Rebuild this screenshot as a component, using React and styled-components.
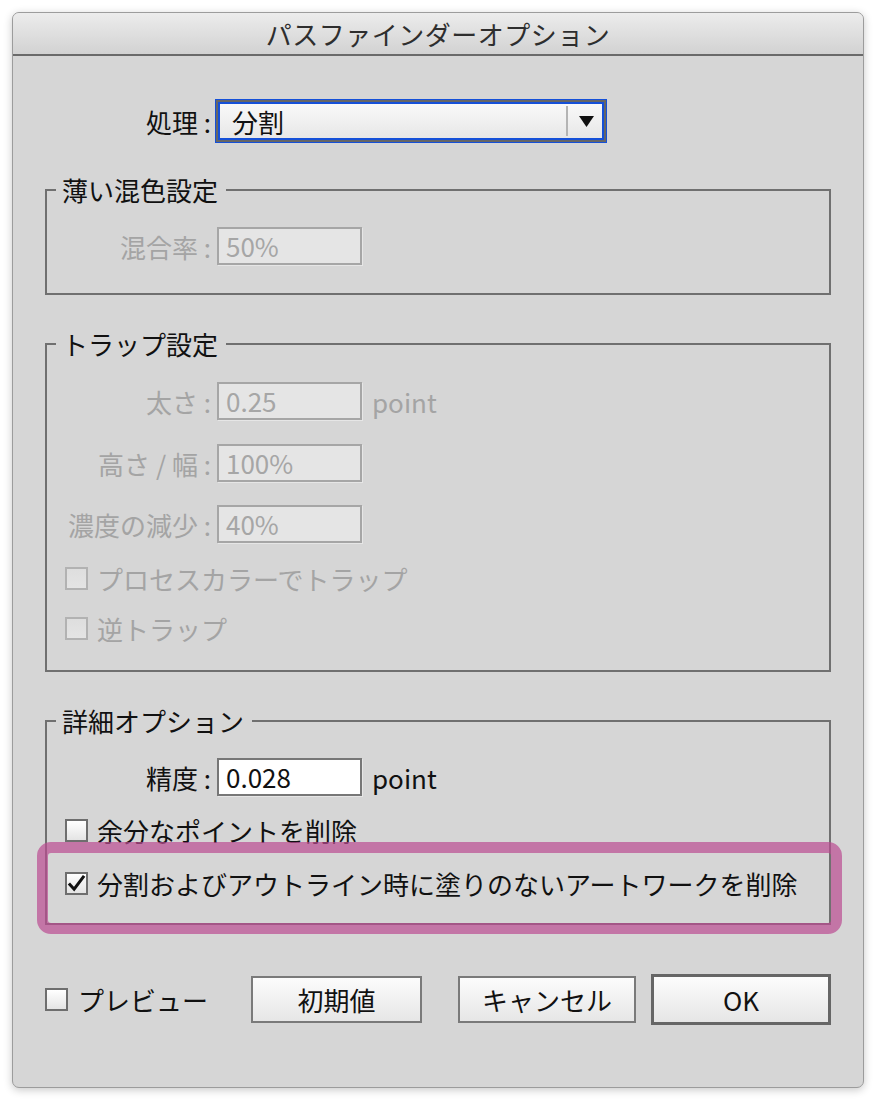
import React from 'react'
import styled, { createGlobalStyle } from 'styled-components'

const Global = createGlobalStyle`
  html, body {
    margin: 0;
    background: #ffffff;
  }
  body {
    font-family: "Noto Sans CJK JP", "Noto Sans", sans-serif;
  }
  * { box-sizing: border-box; }
`

const Page = styled.div`
  padding: 12px 0 0 12px;
  width: 876px;
  height: 1100px;
`

const Window = styled.div`
  position: relative;
  width: 852px;
  height: 1076px;
  background: #d6d6d6;
  border: 1px solid #9c9c9c;
  border-radius: 7px;
  box-shadow: 0 2px 9px rgba(0, 0, 0, 0.22);
  display: flex;
  flex-direction: column;
`

const TitleBar = styled.div`
  height: 43px;
  flex-shrink: 0;
  border-radius: 6px 6px 0 0;
  background: linear-gradient(#ececec, #d2d2d2);
  border-bottom: 2px solid #6a6a6a;
  display: flex;
  align-items: center;
  justify-content: center;
  font-size: 26px;
  color: #2e2e2e;
  letter-spacing: 0.5px;
`

const Body = styled.div`
  padding: 44px 32px 0;
  display: flex;
  flex-direction: column;
`

const Row = styled.div`
  display: flex;
  align-items: center;
  height: ${p => p.$h || 38}px;
  margin-top: ${p => p.$mt || 0}px;
  padding-left: ${p => p.$pl || 0}px;
`

const Label = styled.div`
  width: 146px;
  text-align: right;
  font-size: 26px;
  color: ${p => (p.$disabled ? '#a4a4a4' : '#111')};
  white-space: nowrap;
  margin-right: ${p => p.$gap || 6}px;
`

const Select = styled.div`
  width: 390px;
  height: 42px;
  border: 2px solid #666;
  outline: 2px solid #1550d8;
  outline-offset: -4px;
  box-shadow: 0 0 0 1px #1550d8;
  background: linear-gradient(#fafafa, #e6e6e6);
  display: flex;
  align-items: center;
  padding-left: 14px;
  font-size: 26px;
  color: #111;
`

const SelectValue = styled.div`
  flex: 1;
`

const SelectDivider = styled.div`
  width: 2px;
  height: 30px;
  background: #b4b4b4;
`

const SelectArrow = styled.div`
  width: 36px;
  display: flex;
  justify-content: center;
`

const Group = styled.fieldset`
  margin: ${p => p.$mt}px 0 0;
  padding: ${p => p.$pt}px 18px ${p => p.$pb}px;
  border: 2px solid #707070;
  min-width: 0;
`

const Legend = styled.legend`
  margin-left: -9px;
  padding: 0 8px 0 6px;
  font-size: 26px;
  line-height: 30px;
  color: #111;
`

const TextBox = styled.div`
  width: 145px;
  height: 38px;
  border: 2px solid ${p => (p.$disabled ? '#a6a6a6' : '#777')};
  background: ${p => (p.$disabled ? '#e5e5e5' : '#ffffff')};
  box-shadow: 1px 1px 0 #e6e6e6;
  color: ${p => (p.$disabled ? '#a6a6a6' : '#111')};
  font-size: 26px;
  line-height: 34px;
  padding-left: 7px;
`

const Unit = styled.div`
  margin-left: 10px;
  font-size: 26px;
  color: ${p => (p.$disabled ? '#a4a4a4' : '#111')};
`

const CheckItem = styled.label`
  display: flex;
  align-items: center;
  font-size: 26px;
  color: ${p => (p.$disabled ? '#a4a4a4' : '#111')};
  white-space: nowrap;
`

const Box = styled.span`
  width: 23px;
  height: 23px;
  margin-right: ${p => p.$gap || 9}px;
  border: 2px solid ${p => (p.$disabled ? '#b2b2b2' : '#6e6e6e')};
  background: ${p => (p.$disabled ? 'linear-gradient(#dedede, #e4e4e4)' : 'linear-gradient(#ffffff, #e4e4e4)')};
  display: flex;
  align-items: center;
  justify-content: center;
`

const Footer = styled.div`
  display: flex;
  align-items: center;
  height: 51px;
  margin-top: 49px;
`

const Buttons = styled.div`
  margin-left: auto;
  display: flex;
  align-items: center;
`

const Button = styled.div`
  width: ${p => p.$w}px;
  height: ${p => (p.$default ? 51 : 47)}px;
  margin-left: ${p => p.$ml || 0}px;
  border: ${p => (p.$default ? '3px solid #666' : '2px solid #7a7a7a')};
  background: linear-gradient(#fcfcfc, #e6e6e6);
  display: flex;
  align-items: center;
  justify-content: center;
  font-size: 26px;
  color: #111;
`

const Highlight = styled.div`
  position: absolute;
  left: 24px;
  top: 829px;
  width: 805px;
  height: 92px;
  border: 11px solid rgba(186, 76, 146, 0.7);
  border-radius: 14px;
  pointer-events: none;
`

function Check({ checked, disabled, gap }) {
  return (
    <Box $disabled={disabled} $gap={gap}>
      {checked && (
        <svg width="20" height="18" viewBox="0 0 20 18">
          <path d="M2 9.5 L7.5 15.5 L18 1.5" fill="none" stroke="#111" strokeWidth="3.2" strokeLinejoin="miter" />
        </svg>
      )}
    </Box>
  )
}

export default function App() {
  return (
    <Page>
      <Global />
      <Window>
        <TitleBar>パスファインダーオプション</TitleBar>
        <Body>
          <Row $h={42} $pl={20}>
            <Label $gap={5}>処理 :</Label>
            <Select>
              <SelectValue>分割</SelectValue>
              <SelectDivider />
              <SelectArrow>
                <svg width="15" height="11" viewBox="0 0 15 11">
                  <path d="M0 0 H15 L7.5 11 Z" fill="#111" />
                </svg>
              </SelectArrow>
            </Select>
          </Row>

          <Group $mt={33} $pt={22} $pb={28}>
            <Legend>薄い混色設定</Legend>
            <Row>
              <Label $disabled>混合率 :</Label>
              <TextBox $disabled>50%</TextBox>
            </Row>
          </Group>

          <Group $mt={34} $pt={23} $pb={25}>
            <Legend>トラップ設定</Legend>
            <Row>
              <Label $disabled>太さ :</Label>
              <TextBox $disabled>0.25</TextBox>
              <Unit $disabled>point</Unit>
            </Row>
            <Row $mt={24}>
              <Label $disabled>高さ / 幅 :</Label>
              <TextBox $disabled>100%</TextBox>
            </Row>
            <Row $mt={23}>
              <Label $disabled>濃度の減少 :</Label>
              <TextBox $disabled>40%</TextBox>
            </Row>
            <Row $h={34} $mt={18}>
              <CheckItem $disabled>
                <Check disabled />
                プロセスカラーでトラップ
              </CheckItem>
            </Row>
            <Row $h={34} $mt={16}>
              <CheckItem $disabled>
                <Check disabled />
                逆トラップ
              </CheckItem>
            </Row>
          </Group>

          <Group $mt={34} $pt={22} $pb={23}>
            <Legend>詳細オプション</Legend>
            <Row>
              <Label>精度 :</Label>
              <TextBox>0.028</TextBox>
              <Unit>point</Unit>
            </Row>
            <Row $h={34} $mt={17}>
              <CheckItem>
                <Check />
                余分なポイントを削除
              </CheckItem>
            </Row>
            <Row $h={34} $mt={19}>
              <CheckItem>
                <Check checked />
                分割およびアウトライン時に塗りのないアートワークを削除
              </CheckItem>
            </Row>
          </Group>

          <Footer>
            <CheckItem>
              <Check gap={10} />
              プレビュー
            </CheckItem>
            <Buttons>
              <Button $w={171}>初期値</Button>
              <Button $w={178} $ml={36}>キャンセル</Button>
              <Button $w={180} $ml={15} $default>OK</Button>
            </Buttons>
          </Footer>
        </Body>
        <Highlight />
      </Window>
    </Page>
  )
}
